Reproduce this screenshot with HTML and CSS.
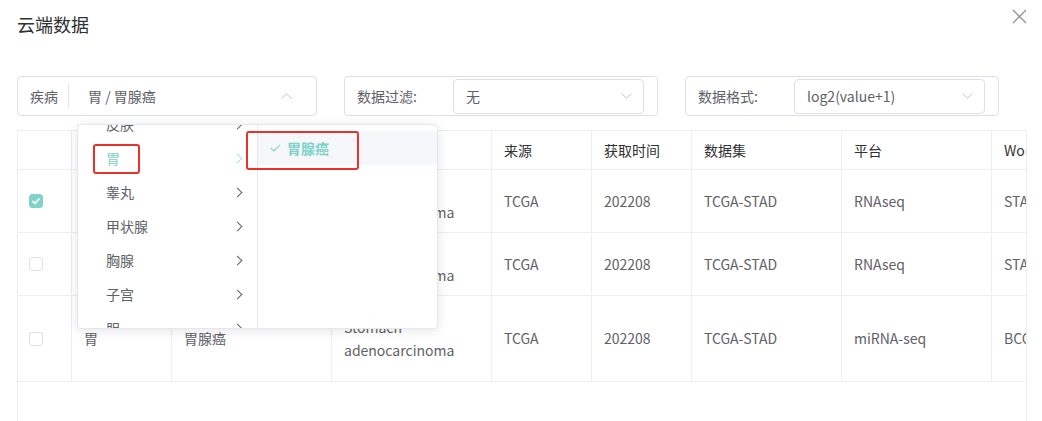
FILE: index.html
```html
<!DOCTYPE html>
<html lang="zh-CN">
<head>
    <meta charset="UTF-8">
    <meta name="viewport" content="width=device-width, initial-scale=1.0">
    <title>云端数据</title>
    <link rel="stylesheet" href="styles.css">
</head>
<body>
    <div class="dialog">
        <div class="dialog-header">
            <span class="dialog-title">云端数据</span>
            <button class="close-btn" type="button" aria-label="关闭">
                <svg width="15" height="15" viewBox="0 0 15 15"><path d="M1 1 L14 14 M14 1 L1 14" stroke="#909399" stroke-width="1.3" fill="none"/></svg>
            </button>
        </div>

        <div class="filters">
            <div class="filter-box disease-box">
                <span class="filter-label">疾病</span>
                <span class="divider"></span>
                <span class="filter-value">胃 / 胃腺癌</span>
                <svg class="arrow" width="11" height="6" viewBox="0 0 11 6"><path d="M0.5 5.5 L5.5 0.8 L10.5 5.5" stroke="#c0c4cc" stroke-width="1" fill="none"/></svg>
            </div>
            <div class="filter-box">
                <span class="filter-label wide">数据过滤:</span>
                <div class="select">
                    <span class="filter-value">无</span>
                    <svg class="arrow" width="11" height="6" viewBox="0 0 11 6"><path d="M0.5 0.5 L5.5 5.2 L10.5 0.5" stroke="#c0c4cc" stroke-width="1" fill="none"/></svg>
                </div>
            </div>
            <div class="filter-box">
                <span class="filter-label wide">数据格式:</span>
                <div class="select">
                    <span class="filter-value">log2(value+1)</span>
                    <svg class="arrow" width="11" height="6" viewBox="0 0 11 6"><path d="M0.5 0.5 L5.5 5.2 L10.5 0.5" stroke="#c0c4cc" stroke-width="1" fill="none"/></svg>
                </div>
            </div>
        </div>

        <div class="table-wrap">
            <table class="data-table">
                <colgroup>
                    <col style="width: 54px">
                    <col style="width: 100px">
                    <col style="width: 160px">
                    <col style="width: 160px">
                    <col style="width: 100px">
                    <col style="width: 100px">
                    <col style="width: 150px">
                    <col style="width: 150px">
                    <col style="width: 200px">
                </colgroup>
                <thead>
                    <tr class="head-row">
                        <th></th>
                        <th>疾病</th>
                        <th>亚型</th>
                        <th>英文名称</th>
                        <th>来源</th>
                        <th>获取时间</th>
                        <th>数据集</th>
                        <th>平台</th>
                        <th>Workflow</th>
                    </tr>
                </thead>
                <tbody>
                    <tr class="row">
                        <td class="check-cell"><span class="checkbox checked"><svg width="10" height="8" viewBox="0 0 10 8"><path d="M1.5 4 L4 6.3 L8.5 1.5" stroke="#fff" stroke-width="1.8" fill="none"/></svg></span></td>
                        <td>胃</td>
                        <td>胃腺癌</td>
                        <td>Stomach adenocarcinoma</td>
                        <td>TCGA</td>
                        <td>202208</td>
                        <td>TCGA-STAD</td>
                        <td>RNAseq</td>
                        <td>STAR - Counts</td>
                    </tr>
                    <tr class="row">
                        <td class="check-cell"><span class="checkbox"></span></td>
                        <td>胃</td>
                        <td>胃腺癌</td>
                        <td>Stomach adenocarcinoma</td>
                        <td>TCGA</td>
                        <td>202208</td>
                        <td>TCGA-STAD</td>
                        <td>RNAseq</td>
                        <td>STAR - FPKM</td>
                    </tr>
                    <tr class="row tall">
                        <td class="check-cell"><span class="checkbox"></span></td>
                        <td>胃</td>
                        <td>胃腺癌</td>
                        <td>Stomach adenocarcinoma</td>
                        <td>TCGA</td>
                        <td>202208</td>
                        <td>TCGA-STAD</td>
                        <td>miRNA-seq</td>
                        <td>BCGSC miRNA Profiling</td>
                    </tr>
                </tbody>
            </table>
        </div>

        <!-- cascader dropdown, open over the table -->
        <div class="cascader">
            <div class="cascader-menu first">
                <ul class="cascader-list scrolled">
                    <li class="node">皮肤<span class="node-arrow"></span></li>
                    <li class="node active">胃<span class="node-arrow"></span></li>
                    <li class="node">睾丸<span class="node-arrow"></span></li>
                    <li class="node">甲状腺<span class="node-arrow"></span></li>
                    <li class="node">胸腺<span class="node-arrow"></span></li>
                    <li class="node">子宫<span class="node-arrow"></span></li>
                    <li class="node">胆<span class="node-arrow"></span></li>
                </ul>
            </div>
            <div class="cascader-menu">
                <ul class="cascader-list">
                    <li class="node selected">
                        <svg class="node-check" width="11" height="8" viewBox="0 0 11 8"><path d="M0.8 4 L3.8 7 L10.2 0.8" stroke="#80d3c9" stroke-width="1.1" fill="none"/></svg>
                        胃腺癌
                    </li>
                </ul>
            </div>
        </div>

        <!-- red annotation boxes -->
        <div class="mark mark-stomach"></div>
        <div class="mark mark-subtype"></div>
    </div>
</body>
</html>
```

FILE: styles.css
```css
/* Reset */
* {
    box-sizing: border-box;
    margin: 0;
    padding: 0;
}

body {
    background-color: #fff;
    color: #606266;
    font-family: "Noto Sans CJK SC", sans-serif;
    font-size: 14px;
    overflow: hidden;
}

/* Dialog */
.dialog {
    position: relative;
    height: 421px;
    padding: 12px 15px 0 17px;
}

.dialog-header {
    display: flex;
    justify-content: space-between;
    align-items: flex-start;
}

.dialog-title {
    font-size: 18px;
    line-height: 24px;
    color: #303133;
}

.close-btn {
    display: flex;
    margin-top: -3px;
    border: none;
    background: none;
    cursor: pointer;
}

/* Filters */
.filters {
    display: flex;
    gap: 27px;
    margin-top: 40px;
}

.filter-box {
    display: flex;
    align-items: center;
    width: 314px;
    height: 40px;
    padding: 0 13px 1px 12px;
    border: 1px solid #dcdfe6;
    border-radius: 4px;
}

.disease-box {
    width: 300px;
    padding-right: 0;
}

.filter-label {
    flex-shrink: 0;
    color: #606266;
}

.filter-label.wide {
    width: 96px;
}

.divider {
    width: 1px;
    height: 25px;
    margin: 0 19px 0 10px;
    background-color: #e4e7ed;
}

.filter-value {
    flex: 1;
    color: #606266;
}

.disease-box .arrow {
    margin-right: 24px;
}

.select {
    display: flex;
    align-items: center;
    flex: 1;
    height: 35px;
    margin-top: 1px;
    padding: 0 12px;
    border: 1px solid #dcdfe6;
    border-radius: 4px;
}

.select .arrow {
    margin-right: -1px;
}

/* Table */
.table-wrap {
    width: 1010px;
    height: 300px;
    margin-top: 14px;
    border: 1px solid #ebeef5;
    border-bottom: none;
    overflow: hidden;
}

.data-table {
    table-layout: fixed;
    width: 1174px;
    border-collapse: separate;
    border-spacing: 0;
}

.data-table th,
.data-table td {
    padding: 0 12px;
    border-right: 1px solid #ebeef5;
    border-bottom: 1px solid #ebeef5;
    text-align: left;
    vertical-align: middle;
    line-height: 23px;
    white-space: normal;
    overflow: hidden;
}

.data-table th {
    height: 39px;
    font-weight: normal;
    color: #303133;
    white-space: nowrap;
}

.row td {
    height: 63px;
}

.row.tall td {
    height: 86px;
}

.data-table td.check-cell {
    padding-left: 11px;
}

.checkbox {
    display: flex;
    align-items: center;
    justify-content: center;
    width: 14px;
    height: 14px;
    border: 1px solid #dcdfe6;
    border-radius: 3px;
    background-color: #fff;
}

.checkbox.checked {
    border-color: #80d3c9;
    background-color: #80d3c9;
}

/* Cascader dropdown */
.cascader {
    position: absolute;
    left: 77px;
    top: 124px;
    display: flex;
    width: 361px;
    height: 205px;
    background-color: #fff;
    border: 1px solid #e4e7ed;
    border-radius: 4px;
    box-shadow: 0 2px 12px rgba(0, 0, 0, 0.1);
    overflow: hidden;
}

.cascader-menu {
    flex: 1;
    padding-top: 6px;
    overflow: hidden;
}

.cascader-menu.first {
    flex: 0 0 180px;
    padding-top: 0;
    border-right: 1px solid #e4e7ed;
}

.cascader-list {
    list-style: none;
}

.cascader-list.scrolled {
    margin-top: -18px;
}

.node {
    display: flex;
    align-items: center;
    justify-content: space-between;
    height: 34px;
    padding: 0 16px 0 28px;
    color: #606266;
}

.node-arrow {
    width: 7px;
    height: 7px;
    margin-top: 1px;
    border-top: 1px solid #606266;
    border-right: 1px solid #606266;
    transform: rotate(45deg);
}

.node.active {
    color: #80d3c9;
}

.node.active .node-arrow {
    border-color: #a9e2db;
}

.node.selected {
    justify-content: flex-start;
    gap: 6px;
    padding-left: 12px;
    background-color: #f5f7fa;
    color: #80d3c9;
    font-weight: bold;
}

/* Annotation boxes */
.mark {
    position: absolute;
    border: 2px solid #e8322a;
    border-radius: 3px;
}

.mark-stomach {
    left: 93px;
    top: 144px;
    width: 47px;
    height: 30px;
}

.mark-subtype {
    left: 246px;
    top: 131px;
    width: 113px;
    height: 39px;
}
```
